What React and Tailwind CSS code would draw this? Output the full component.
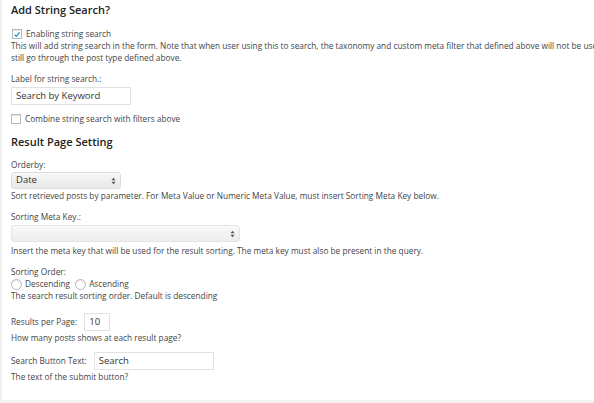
import React from 'react';

function Checkbox({ checked }) {
  return (
    <span className="inline-flex w-[10px] h-[10px] border border-[#b4b9be] bg-white shadow-[inset_0_1px_1px_rgba(0,0,0,0.1)] items-center justify-center shrink-0">
      {checked && (
        <svg width="9" height="9" viewBox="0 0 10 10">
          <path d="M2 5.2 L4 7.3 L8.2 2.4" fill="none" stroke="#1e8cbe" strokeWidth="1.6" />
        </svg>
      )}
    </span>
  );
}

function Radio() {
  return (
    <span className="inline-block w-[11px] h-[11px] rounded-full border border-[#b4b9be] bg-white shadow-[inset_0_1px_1px_rgba(0,0,0,0.1)] shrink-0" />
  );
}

function SelectArrows() {
  return (
    <svg width="5" height="8" viewBox="0 0 5 8">
      <path d="M0.5 3.3 L2.5 0.8 L4.5 3.3 Z M0.5 4.7 L2.5 7.2 L4.5 4.7 Z" fill="#555" />
    </svg>
  );
}

function Help({ children, className = '' }) {
  return <p className={`text-[8.3px] leading-[12px] text-[#444] ${className}`}>{children}</p>;
}

export default function App() {
  return (
    <div
      className="w-[594px] h-[403px] bg-white border-l-2 border-[#f1f1f1] border-b-[3px] overflow-hidden pl-[9px]"
      style={{ fontFamily: '"Open Sans", "Noto Sans", sans-serif' }}
    >
      <h3 className="text-[11px] font-semibold text-[#222] leading-[16px] pt-[2px]">Add String Search?</h3>

      <div className="flex items-center gap-[4px] mt-[10px] pl-[1px]">
        <Checkbox checked />
        <span className="text-[8.3px] leading-[12px] text-[#444]">Enabling string search</span>
      </div>
      <Help className="whitespace-nowrap">
        This will add string search in the form. Note that when user using this to search, the taxonomy and custom meta filter that defined above will not be used,
      </Help>
      <Help>still go through the post type defined above.</Help>

      <Help className="mt-[9px]">Label for string search.:</Help>
      <div className="mt-[2px] w-[120px] h-[18px] border border-[#e2e2e2] bg-white flex items-center px-[4px] text-[9.5px] text-[#333]">
        Search by Keyword
      </div>

      <div className="flex items-center gap-[4px] mt-[8px]">
        <Checkbox />
        <span className="text-[8.3px] leading-[12px] text-[#444]">Combine string search with filters above</span>
      </div>

      <h3 className="text-[11px] font-semibold text-[#222] leading-[16px] mt-[9px]">Result Page Setting</h3>

      <Help className="mt-[9px]">Orderby:</Help>
      <div className="mt-[1px] w-[110px] h-[17px] rounded-[3px] border border-[#ddd] bg-gradient-to-b from-[#f7f7f7] to-[#e8e8e8] flex items-center justify-between px-[4px] text-[9.5px] text-[#333]">
        <span>Date</span>
        <SelectArrows />
      </div>
      <Help className="mt-[1px]">Sort retrieved posts by parameter. For Meta Value or Numeric Meta Value, must insert Sorting Meta Key below.</Help>

      <Help className="mt-[9px]">Sorting Meta Key.:</Help>
      <div className="mt-[2px] w-[229px] h-[17px] rounded-[3px] border border-[#e5e5e5] bg-gradient-to-b from-[#f9f9f9] to-[#ededed] flex items-center justify-end px-[4px]">
        <SelectArrows />
      </div>
      <Help className="mt-[3px]">Insert the meta key that will be used for the result sorting. The meta key must also be present in the query.</Help>

      <Help className="mt-[9px]">Sorting Order:</Help>
      <div className="flex items-center text-[8.3px] leading-[12px] text-[#444]">
        <Radio />
        <span className="ml-[3px]">Descending</span>
        <span className="ml-[5px] flex"><Radio /></span>
        <span className="ml-[3px]">Ascending</span>
      </div>
      <Help>The search result sorting order. Default is descending</Help>

      <div className="flex items-center mt-[11px]">
        <span className="text-[8.3px] leading-[12px] text-[#444]">Results per Page:</span>
        <div className="ml-[7px] w-[26px] h-[18px] border border-[#e2e2e2] flex items-center px-[4px] text-[9.5px] text-[#333]">10</div>
      </div>
      <Help className="mt-[1px]">How many posts shows at each result page?</Help>

      <div className="flex items-center mt-[8px]">
        <span className="text-[8.3px] leading-[12px] text-[#444]">Search Button Text:</span>
        <div className="ml-[7px] w-[120px] h-[18px] border border-[#e2e2e2] flex items-center px-[4px] text-[9.5px] text-[#333]">Search</div>
      </div>
      <Help className="mt-[1px]">The text of the submit button?</Help>
    </div>
  );
}
